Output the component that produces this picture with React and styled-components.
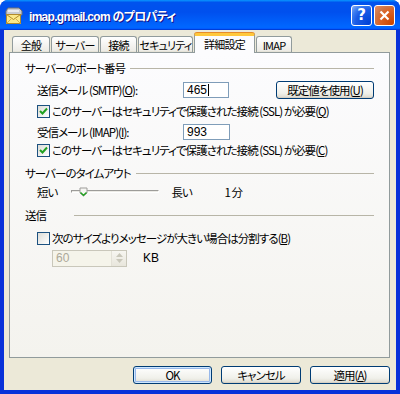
import React from "react";
import styled, { createGlobalStyle } from "styled-components";

const GlobalStyle = createGlobalStyle`
  html, body {
    margin: 0;
    padding: 0;
    background: #ffffff;
  }
  body {
    font-family: "Noto Sans CJK JP", "Liberation Sans", sans-serif;
    font-size: 11.5px;
    letter-spacing: -0.95px;
    font-feature-settings: "palt";
    color: #000;
  }
  * { box-sizing: border-box; }
`;

const FONT = `"Noto Sans CJK JP", "Liberation Sans", sans-serif`;

const Window = styled.div`
  width: 400px;
  height: 394px;
  display: flex;
  flex-direction: column;
  background: #0831d9;
  border-radius: 8px 8px 0 0;
  overflow: hidden;
`;

const TitleBar = styled.div`
  height: 30px;
  flex: none;
  display: flex;
  align-items: center;
  padding: 0 5px 0 5px;
  background: linear-gradient(
    180deg,
    #0997ff,
    #0053ee 8%,
    #0050ee 40%,
    #0066ff 88%,
    #0066ff 93%,
    #005bff 95%,
    #003dd7 96%,
    #003dd7
  );
`;

const TitleText = styled.div`
  flex: 1;
  margin-left: 6px;
  color: #fff;
  font-family: "Liberation Sans", ${FONT};
  font-weight: bold;
  font-size: 12px;
  letter-spacing: -0.7px;
  text-shadow: 1px 1px #0f1089;
  white-space: nowrap;
`;

const CaptionButton = styled.div`
  width: 21px;
  height: 21px;
  margin-left: 2px;
  border: 1px solid #fff;
  border-radius: 3px;
  display: flex;
  align-items: center;
  justify-content: center;
  color: #fff;
  font-family: "DejaVu Sans", sans-serif;
  font-weight: bold;
  font-size: 15px;
  letter-spacing: 0;
  background: ${(p) =>
    p.$close
      ? "radial-gradient(circle at 90% 90%, #cc4600 0%, #dc6527 55%, #cd7546 70%, #e88d62 100%)"
      : "radial-gradient(circle at 90% 90%, #0042d6 0%, #1a5ce6 55%, #3b7cf0 75%, #8fb2f5 100%)"};
`;

const Body = styled.div`
  flex: 1;
  margin: 0 4px 4px 4px;
  background: #ece9d8;
  display: flex;
  flex-direction: column;
  padding: 3px 6px 6px 5px;
`;

const Tabs = styled.div`
  display: flex;
  align-items: flex-end;
  gap: 1px;
  padding-left: 3px;
  height: 19px;
  position: relative;
  z-index: 1;
`;

const Tab = styled.div`
  width: ${(p) => p.$w}px;
  height: ${(p) => (p.$active ? 20 : 16)}px;
  margin-bottom: ${(p) => (p.$active ? -1 : 0)}px;
  border: 1px solid #919b9c;
  border-bottom: none;
  border-top: ${(p) => (p.$active ? "3px solid #ffc83c" : "1px solid #919b9c")};
  border-radius: 3px 3px 0 0;
  background: ${(p) =>
    p.$active ? "#fcfcfe" : "linear-gradient(180deg, #ffffff, #ecebe5 95%, #d8d2bd)"};
  box-shadow: ${(p) => (p.$active ? "0 -1px 0 #e68b2c" : "none")};
  display: flex;
  align-items: center;
  justify-content: center;
  font-size: 11px;
  letter-spacing: -0.8px;
  white-space: nowrap;
  overflow: hidden;
  padding-bottom: ${(p) => (p.$active ? 1 : 0)}px;
`;

const Panel = styled.div`
  height: 306px;
  flex: none;
  border: 1px solid #919b9c;
  background: linear-gradient(180deg, #fcfcfe, #f4f3ee);
  padding: 0 15px 0 15px;
  display: flex;
  flex-direction: column;
`;

const GroupHeader = styled.div`
  display: flex;
  align-items: center;
  height: 16px;
  margin-top: ${(p) => p.$top}px;
  white-space: nowrap;
`;

const GroupLine = styled.div`
  flex: 1;
  height: 1px;
  margin-left: ${(p) => p.$gap || 5}px;
  background: #b8b5a7;
`;

const Row = styled.div`
  display: flex;
  align-items: center;
  height: ${(p) => p.$h || 18}px;
  margin-top: ${(p) => p.$top}px;
  padding-left: ${(p) => p.$indent || 12}px;
  white-space: nowrap;
`;

const Label = styled.div`
  width: ${(p) => p.$w}px;
  flex: none;
`;

const TextBox = styled.div`
  width: 47px;
  height: 16px;
  border: 1px solid #7f9db9;
  background: #fff;
  display: flex;
  align-items: center;
  padding-left: 3px;
  font-family: "Liberation Sans", sans-serif;
  font-size: 12px;
  letter-spacing: 0;
`;

const Caret = styled.span`
  display: inline-block;
  width: 1px;
  height: 12px;
  background: #000;
  margin-left: 1px;
`;

const XPButton = styled.div`
  width: ${(p) => p.$w}px;
  height: 18px;
  flex: none;
  margin-left: ${(p) => p.$left || 0}px;
  border: 1px solid #003c74;
  border-radius: 3px;
  background: linear-gradient(180deg, #ffffff, #f0f0ea 70%, #e3e1d7 90%, #d6d0c5);
  box-shadow: ${(p) =>
    p.$default
      ? "inset 0 0 0 1px #cee7ff, inset 0 0 0 2px #98b8ea"
      : "inset 0 -1px 0 #d6d0c5"};
  display: flex;
  align-items: center;
  justify-content: center;
  white-space: nowrap;
`;

const CheckBox = styled.div`
  width: 13px;
  height: 13px;
  flex: none;
  border: 1px solid #1c5180;
  background: linear-gradient(135deg, #dcdcd7, #ffffff);
  display: flex;
  align-items: center;
  justify-content: center;
  margin-right: 2px;
`;

const Slider = styled.div`
  position: relative;
  width: 88px;
  height: 18px;
  margin: 0 12px 0 14px;
  flex: none;
`;

const Track = styled.div`
  position: absolute;
  left: 0;
  right: 0;
  top: 7px;
  height: 3px;
  border-top: 1px solid #9d9c99;
  border-left: 1px solid #9d9c99;
  border-bottom: 1px solid #fff;
  border-right: 1px solid #fff;
  background: #ecebe6;
`;

const Thumb = styled.svg`
  position: absolute;
  left: 8px;
  top: 4px;
`;

const SpinBox = styled.div`
  width: 75px;
  height: 17px;
  border: 1px solid #c9c7ba;
  background: #f5f4ea;
  display: flex;
  align-items: center;
  justify-content: space-between;
  padding-left: 3px;
  color: #aca899;
  font-family: "Liberation Sans", sans-serif;
  font-size: 12px;
  letter-spacing: 0;
`;

const SpinArrows = styled.div`
  width: 15px;
  height: 15px;
  border-left: 1px solid #e3e1d7;
  background: linear-gradient(180deg, #f7f6f1, #e8e6dc);
  display: flex;
  flex-direction: column;
  align-items: center;
  justify-content: center;
  gap: 2px;
`;

const Unit = styled.div`
  margin-left: 16px;
  font-family: "Liberation Sans", sans-serif;
  font-size: 12px;
  letter-spacing: 0;
`;

const Footer = styled.div`
  display: flex;
  justify-content: flex-end;
  gap: 9px;
  margin-top: 8px;
`;

const Check = () => (
  <svg width="9" height="9" viewBox="0 0 9 9">
    <path d="M1 4 L3.5 6.5 L8 1.5" fill="none" stroke="#21a121" strokeWidth="2" />
  </svg>
);

const MailIcon = () => (
  <svg width="18" height="17" viewBox="0 0 18 17">
    <path d="M3 1 H14 L17 4 V8 H1 V4 Z" fill="#c8cbd0" stroke="#6c7076" />
    <rect x="3" y="3" width="11" height="2" fill="#e9ebee" />
    <rect x="1.5" y="7.5" width="14" height="9" fill="#fbe98a" stroke="#b08a2c" />
    <path d="M1.5 7.5 L8.5 12.5 L15.5 7.5" fill="none" stroke="#b08a2c" />
    <path d="M1.5 16.5 L6.5 11.5 M15.5 16.5 L10.5 11.5" stroke="#d5b04c" />
  </svg>
);

const Arrow = ({ up }) => (
  <svg width="7" height="4" viewBox="0 0 7 4">
    <path d={up ? "M0 4 L3.5 0 L7 4 Z" : "M0 0 L3.5 4 L7 0 Z"} fill="#c9c7ba" />
  </svg>
);

const App = () => {
  return (
    <>
      <GlobalStyle />
      <Window>
        <TitleBar>
          <MailIcon />
          <TitleText>imap.gmail.com のプロパティ</TitleText>
          <CaptionButton>?</CaptionButton>
          <CaptionButton $close>
            <svg width="11" height="11" viewBox="0 0 11 11">
              <path d="M1.5 1.5 L9.5 9.5 M9.5 1.5 L1.5 9.5" stroke="#fff" strokeWidth="2.2" />
            </svg>
          </CaptionButton>
        </TitleBar>

        <Body>
          <Tabs>
            <Tab $w={38}>全般</Tab>
            <Tab $w={48}>サーバー</Tab>
            <Tab $w={37}>接続</Tab>
            <Tab $w={55}>セキュリティ</Tab>
            <Tab $w={61} $active>詳細設定</Tab>
            <Tab $w={36}>IMAP</Tab>
          </Tabs>

          <Panel>
            <GroupHeader $top={7}>
              サーバーのポート番号
              <GroupLine />
            </GroupHeader>

            <Row $top={5}>
              <Label $w={146}>
                送信メール (SMTP)(<u>O</u>):
              </Label>
              <TextBox>
                465
                <Caret />
              </TextBox>
              <XPButton $w={98} $left={47}>
                既定値を使用(<u>U</u>)
              </XPButton>
            </Row>

            <Row $top={5} $h={14}>
              <CheckBox>
                <Check />
              </CheckBox>
              このサーバーはセキュリティで保護された接続 (SSL) が必要(<u>Q</u>)
            </Row>

            <Row $top={5}>
              <Label $w={146}>
                受信メール (IMAP)(<u>I</u>):
              </Label>
              <TextBox>993</TextBox>
            </Row>

            <Row $top={2} $h={14}>
              <CheckBox>
                <Check />
              </CheckBox>
              このサーバーはセキュリティで保護された接続 (SSL) が必要(<u>C</u>)
            </Row>

            <GroupHeader $top={8}>
              サーバーのタイムアウト
              <GroupLine />
            </GroupHeader>

            <Row $top={2}>
              <span>短い</span>
              <Slider>
                <Track />
                <Thumb width="9" height="10" viewBox="0 0 9 10">
                  <path
                    d="M1 1 H8 V6 L4.5 9 L1 6 Z"
                    fill="#f6f6f3"
                    stroke="#9d9c99"
                  />
                  <path d="M1.5 5.5 L4.5 8.3 L7.5 5.5" fill="none" stroke="#21a121" strokeWidth="1.4" />
                </Thumb>
              </Slider>
              <Label $w={53}>長い</Label>
              <span>1 分</span>
            </Row>

            <GroupHeader $top={6}>
              送信
              <GroupLine $gap={28} />
            </GroupHeader>

            <Row $top={8} $h={14}>
              <CheckBox />
              次のサイズよりメッセージが大きい場合は分割する(<u>B</u>)
            </Row>

            <Row $top={4} $indent={27}>
              <SpinBox>
                60
                <SpinArrows>
                  <Arrow up />
                  <Arrow />
                </SpinArrows>
              </SpinBox>
              <Unit>KB</Unit>
            </Row>
          </Panel>

          <Footer>
            <XPButton $w={79} $default>
              OK
            </XPButton>
            <XPButton $w={80}>キャンセル</XPButton>
            <XPButton $w={80}>
              適用(<u>A</u>)
            </XPButton>
          </Footer>
        </Body>
      </Window>
    </>
  );
};

export default App;
